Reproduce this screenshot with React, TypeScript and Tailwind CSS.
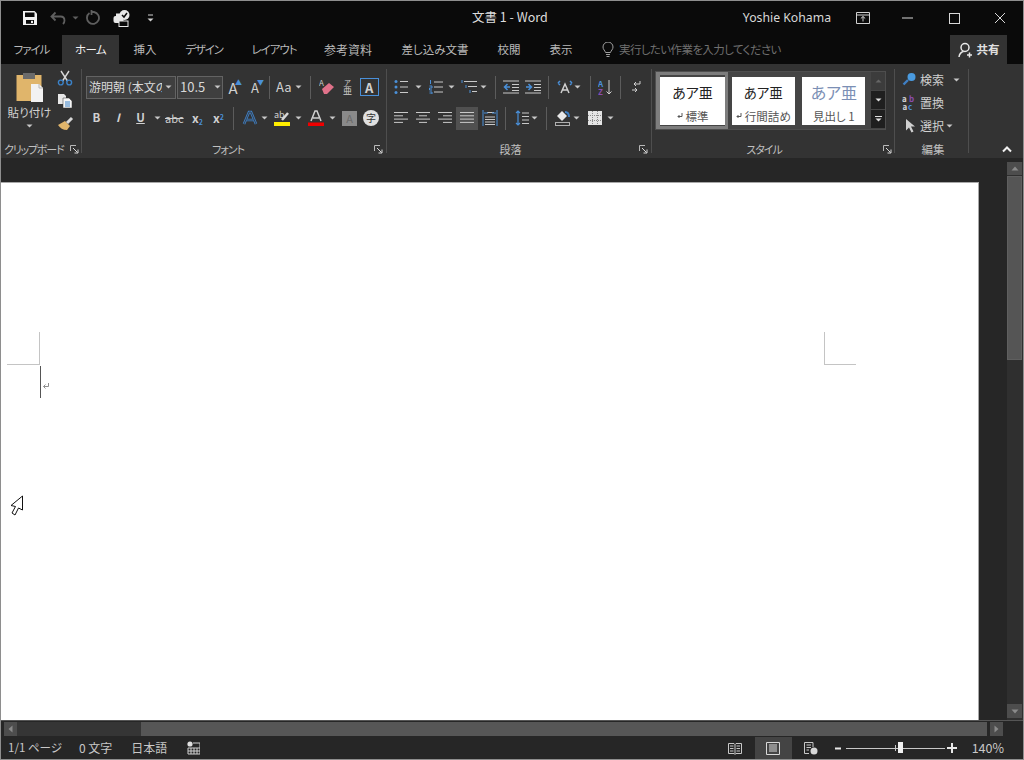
import React from "react";

const FONT = "[font-family:'Noto_Sans_CJK_JP','Noto_Sans',sans-serif] [font-feature-settings:'palt']";

type SP = { w?: number; h?: number; vb?: string; children?: React.ReactNode };
const S = ({ w = 16, h = 16, vb, children }: SP) => (
  <svg width={w} height={h} viewBox={vb ?? `0 0 ${w} ${h}`} fill="none" className="block shrink-0">
    {children}
  </svg>
);

const Caret = ({ c = "#c8c8c8" }: { c?: string }) => (
  <S w={7} h={4}>
    <path d="M0.5 0.5H6.5L3.5 3.5Z" fill={c} />
  </S>
);
const Launcher = () => (
  <S w={9} h={9}>
    <path d="M0.5 6V0.5H6" stroke="#b8b8b8" />
    <path d="M3 3L7.5 7.5M8 4.5V8H4.5" stroke="#d8d8d8" />
  </S>
);
const VSep = () => <div className="w-px h-[23px] bg-[#5c5c5c] shrink-0" />;
const GSep = () => <div className="w-px h-[84px] bg-[#4e4e4e] shrink-0 mt-[5px]" />;

const Lines = ({ rows }: { rows: [number, number][] }) => (
  <S w={14} h={14}>
    {rows.map(([a, b], i) => (
      <path key={i} d={`M${a} ${1.5 + i * 3.3}H${b}`} stroke="#c9c9c9" />
    ))}
  </S>
);

const Tab = ({ cls, children }: { cls: string; children: React.ReactNode }) => (
  <div className={`${cls} flex items-center justify-center text-[#b9b9b9] shrink-0`}>{children}</div>
);

const Style = ({ cls, top, topCls, sub, mark }: { cls: string; top: string; topCls: string; sub: string; mark?: boolean }) => (
  <div className={`${cls} h-[48px] bg-white flex flex-col items-center shrink-0`}>
    <div className={`${topCls} h-[31px] flex items-center justify-center [font-feature-settings:'normal'] whitespace-nowrap`}>{top}</div>
    <div className="text-[11.5px] leading-[16px] text-[#555] flex items-center gap-[3px] whitespace-nowrap">
      {mark && (
        <S w={6} h={7}>
          <path d="M5 1V4.5H1M2.5 3L1 4.5L2.5 6" stroke="#555" />
        </S>
      )}
      {sub}
    </div>
  </div>
);

export default function App() {
  return (
    <div className={`${FONT} w-[1024px] h-[760px] flex flex-col border border-[#8e8e8e] bg-[#262626] overflow-hidden`}>
      {/* title bar */}
      <div className="h-[34px] bg-[#0a0a0a] flex items-center shrink-0 relative">
        <div className="w-[21px]" />
        <S w={16} h={16}>
          <path d="M1 1H12.5L15 3.5V15H1Z" fill="#f2f2f2" />
          <rect x="3" y="2.5" width="9.5" height="4.5" fill="#0a0a0a" />
          <rect x="4" y="10" width="8" height="3.8" fill="#0a0a0a" />
          <rect x="9" y="10.8" width="2" height="2.2" fill="#f2f2f2" />
        </S>
        <div className="w-[12px]" />
        <S w={16} h={14}>
          <path d="M5.5 1.5L1.5 5.5L5.5 9.5M1.5 5.5H10.5C13 5.5 14.5 7.2 14.5 9.5C14.5 11 14 12 13 13" stroke="#5f5f5f" strokeWidth="1.8" />
        </S>
        <div className="w-[6px]" />
        <Caret c="#5f5f5f" />
        <div className="w-[7px]" />
        <S w={16} h={16}>
          <path d="M3.5 3A6 6 0 1 0 8 2H5.5M5.5 0V5" stroke="#5f5f5f" strokeWidth="1.8" />
        </S>
        <div className="w-[11px]" />
        <S w={17} h={17}>
          <rect x="0.5" y="6" width="10" height="7" rx="2" fill="#e8e8e8" />
          <path d="M3 6V3.5H8V6" fill="#e8e8e8" />
          <rect x="6" y="11" width="9" height="5.5" fill="#0a0a0a" stroke="#e8e8e8" />
          <circle cx="11.5" cy="5" r="5" fill="#e8e8e8" />
          <path d="M9 5L11 7L14 3" stroke="#0a0a0a" strokeWidth="1.5" />
        </S>
        <div className="w-[17px]" />
        <S w={7} h={9}>
          <path d="M1 1H6" stroke="#d0d0d0" />
          <path d="M0.5 4.5H6.5L3.5 7.5Z" fill="#d0d0d0" />
        </S>
        <div className="flex-1" />
        <div className="absolute left-[471px] top-[7px] text-[12.5px] leading-[18px] text-[#dedede] [font-feature-settings:'normal']">文書 1 - Word</div>
        <div className="text-[12.25px] text-[#d8d8d8] [font-family:'Noto_Sans','Noto_Sans_CJK_JP',sans-serif] whitespace-nowrap">Yoshie Kohama</div>
        <div className="w-[25px]" />
        <S w={14} h={12}>
          <path d="M0.5 0.5H13.5V11.5H0.5ZM0.5 3H13.5" stroke="#d0d0d0" />
          <path d="M7 9.5V4.5M4.8 6.5L7 4.5L9.2 6.5" stroke="#d0d0d0" />
        </S>
        <div className="w-[32px]" />
        <S w={12} h={2}>
          <path d="M0 1H11" stroke="#d8d8d8" />
        </S>
        <div className="w-[35px]" />
        <S w={11} h={11}>
          <rect x="0.5" y="0.5" width="10" height="10" stroke="#d8d8d8" />
        </S>
        <div className="w-[34px]" />
        <S w={12} h={12}>
          <path d="M1 1L11 11M11 1L1 11" stroke="#d8d8d8" />
        </S>
        <div className="w-[17px]" />
      </div>

      {/* tabs */}
      <div className="h-[29px] bg-[#0a0a0a] flex shrink-0 text-[11.5px]">
        <Tab cls="w-[61px] tracking-[-1px]">ファイル</Tab>
        <Tab cls="w-[57px] bg-[#333333] !text-[#f2f2f2] tracking-[-0.6px]">ホーム</Tab>
        <Tab cls="w-[52px]">挿入</Tab>
        <Tab cls="w-[66px] tracking-[-1.2px]">デザイン</Tab>
        <Tab cls="w-[74px] tracking-[-1px]">レイアウト</Tab>
        <Tab cls="w-[74px] text-[12px]">参考資料</Tab>
        <Tab cls="w-[100px]">差し込み文書</Tab>
        <Tab cls="w-[48px]">校閲</Tab>
        <Tab cls="w-[56px]">表示</Tab>
        <div className="w-[13px]" />
        <div className="flex items-center gap-[5px] text-[#6f6f6f] tracking-[-0.6px]">
          <S w={12} h={16}>
            <path d="M3.5 10.5C3 8.5 1 7.5 1 5A5 5 0 0 1 11 5C11 7.5 9 8.5 8.5 10.5ZM4 12.5H8M4.5 14.5H7.5" stroke="#a0a0a0" />
          </S>
          実行したい作業を入力してください
        </div>
        <div className="flex-1" />
        <div className="w-[57px] mr-[16px] bg-[#333333] flex items-center justify-center gap-[3px] font-bold text-[#e0e0e0]">
          <S w={16} h={16}>
            <circle cx="7" cy="5.5" r="4" stroke="#e8e8e8" strokeWidth="1.5" />
            <path d="M1 15C1.5 11.5 3.5 10 5.5 9.5M11.5 10.5V15.5M9 13H14" stroke="#e8e8e8" strokeWidth="1.5" />
          </S>
          共有
        </div>
      </div>

      {/* ribbon */}
      <div className="h-[94px] bg-[#333333] flex shrink-0 text-[#d0d0d0]">
        {/* clipboard */}
        <div className="w-[80px] flex flex-col shrink-0">
          <div className="h-[74px] flex">
            <div className="w-[55px] ml-px flex flex-col items-center pt-[9px]">
              <S w={29} h={30}>
                <path d="M1.5 2H26.5V28H1.5Z" fill="#e0b56b" />
                <rect x="8" y="0" width="12" height="6" fill="#6b6b6b" />
                <path d="M16 11H24L28 15V29H16Z" fill="#f2f2f2" />
                <path d="M24 11V15H28" stroke="#b8b8b8" />
              </S>
              <div className="text-[11.5px] leading-[16px] mt-[1px] whitespace-nowrap">貼り付け</div>
              <div className="mt-[4px]"><Caret /></div>
            </div>
            <div className="flex flex-col items-start pt-[6px] gap-[7px]">
              <S w={16} h={16}>
                <path d="M4 1L10.5 11M12 1L5.5 11" stroke="#d8d8d8" strokeWidth="1.4" />
                <circle cx="3.8" cy="12.5" r="2.4" stroke="#3b82c8" strokeWidth="1.4" />
                <circle cx="12.2" cy="12.5" r="2.4" stroke="#3b82c8" strokeWidth="1.4" />
              </S>
              <S w={16} h={16}>
                <path d="M1 1H7L9 3V11H1Z" fill="#e8e8e8" />
                <path d="M6 5H12L15 8V15H6Z" fill="#f5f5f5" stroke="#333" strokeWidth="0.5" />
                <path d="M8 9H13M8 11H13M8 13H13" stroke="#3b82c8" />
              </S>
              <S w={17} h={15}>
                <path d="M1 9L8 5L13 10L10 14C6 14 3 12 1 9Z" fill="#e0b56b" />
                <path d="M10 7L15 2" stroke="#d8d8d8" strokeWidth="3" />
              </S>
            </div>
          </div>
          <div className="flex items-center text-[11px] leading-[16px] text-[#c0c0c0] mt-[3px] pl-[3px] whitespace-nowrap tracking-[-1.2px]">
            クリップボード
            <div className="ml-[7px]"><Launcher /></div>
          </div>
        </div>
        <GSep />

        {/* font */}
        <div className="w-[304px] flex flex-col shrink-0 pl-[4px]">
          <div className="flex items-center h-[24px] mt-[11px]">
            <div className="w-[90px] h-[23px] bg-[#3f3f3f] border border-[#636363] flex items-center pl-[2px] text-[12px] text-[#d8d8d8] shrink-0 [font-feature-settings:'normal']">
              <span className="w-[73px] overflow-hidden whitespace-nowrap">游明朝 (本文の</span>
              <div className="ml-[3px]"><Caret /></div>
            </div>
            <div className="w-px" />
            <div className="w-[46px] h-[23px] bg-[#3f3f3f] border border-[#636363] flex items-center pl-[2px] text-[13px] text-[#d8d8d8] gap-[7px] shrink-0">
              <span className="w-[27px]">10.5</span>
              <Caret />
            </div>
            <div className="w-[1px]" />
            <div className="w-[18px] flex justify-center text-[15px] leading-none relative">A<span className="absolute right-0 top-[-1px] text-[7px] text-[#4a90d9]">▲</span></div>
            <div className="w-[4px]" />
            <div className="w-[18px] flex justify-center text-[13px] leading-none relative">A<span className="absolute right-0 top-[-2px] text-[7px] text-[#4a90d9]">▼</span></div>
            <div className="w-[5px]" />
            <VSep />
            <div className="w-[6px]" />
            <span className="text-[13px] text-[#d0d0d0]">Aa</span>
            <div className="w-[3px]" />
            <Caret />
            <div className="w-[8px]" />
            <VSep />
            <div className="w-[8px]" />
            <S w={16} h={16}>
              <text x="0" y="7" fontSize="8" fill="#c8c8c8">A</text>
              <path d="M3 10L10 4L15 8L8 15H5Z" fill="#e0728a" />
            </S>
            <div className="w-[7px]" />
            <div className="w-[12px] flex flex-col items-center leading-none text-[#d0d0d0]">
              <span className="text-[7px] leading-[7px]">ア</span>
              <span className="text-[9px] leading-[9px]">亜</span>
            </div>
            <div className="w-[6px]" />
            <div className="w-[19px] h-[18px] border border-[#4a90d9] flex items-center justify-center text-[13px] font-bold leading-none">A</div>
          </div>
          <div className="flex items-center h-[24px] mt-[7px]">
            <div className="w-[21px] text-center text-[11.5px] font-bold">B</div>
            <div className="w-[22px] text-center text-[11.5px] italic font-bold">I</div>
            <div className="w-[23px] text-center text-[11.5px] font-bold underline">U</div>
            <div className="w-[2px]" />
            <Caret />
            <div className="w-[4px]" />
            <div className="w-[18px] text-center text-[11px] line-through">abc</div>
            <div className="w-[4px]" />
            <div className="w-[21px] text-center text-[12px] font-bold">x<sub className="text-[#4a90d9] text-[7px]">2</sub></div>
            <div className="w-[21px] text-center text-[12px] font-bold">x<sup className="text-[#4a90d9] text-[7px]">2</sup></div>
            <div className="w-[4px]" />
            <VSep />
            <div className="w-[8px]" />
            <S w={16} h={16}>
              <path d="M2 14L7 2H9L14 14M4.5 10H11.5" stroke="#3f7fc4" strokeWidth="2.6" />
              <path d="M2 14L7 2H9L14 14M4.5 10H11.5" stroke="#333" strokeWidth="0.8" />
            </S>
            <div className="w-[3px]" />
            <Caret />
            <div className="w-[6px]" />
            <S w={16} h={16}>
              <text x="0" y="8" fontSize="9" fill="#d0d0d0">ab</text>
              <path d="M8 10L14 3" stroke="#d8d8d8" strokeWidth="2.5" />
              <rect x="0" y="12" width="16" height="4" fill="#ffee00" />
            </S>
            <div className="w-[5px]" />
            <Caret />
            <div className="w-[6px]" />
            <S w={16} h={16}>
              <path d="M3 11L7 1H9L13 11M5 8H11" stroke="#d0d0d0" strokeWidth="1.5" />
              <rect x="0" y="12.5" width="16" height="3.5" fill="#f00000" />
            </S>
            <div className="w-[5px]" />
            <Caret />
            <div className="w-[6px]" />
            <div className="w-[15px] h-[15px] bg-[#8a8a8a] text-[#6a6a6a] text-[11px] leading-[15px] text-center">A</div>
            <div className="w-[6px]" />
            <div className="w-[16px] h-[16px] rounded-full bg-[#e0e0e0] text-[#333] text-[10px] leading-[16px] text-center">字</div>
          </div>
          <div className="text-[11px] leading-[16px] text-[#c0c0c0] mt-[11px] flex justify-center relative pr-[16px] tracking-[-1px]">
            <span>フォント</span>
            <div className="absolute right-[3px] top-[4px]"><Launcher /></div>
          </div>
        </div>
        <GSep />

        {/* paragraph */}
        <div className="w-[264px] flex flex-col shrink-0 pl-[7px]">
          <div className="flex items-center h-[24px] mt-[11px]">
            <S w={14} h={14}>
              <circle cx="2" cy="1.5" r="1.5" fill="#4a90d9" />
              <circle cx="2" cy="7" r="1.5" fill="#4a90d9" />
              <circle cx="2" cy="12.5" r="1.5" fill="#4a90d9" />
              <path d="M6 1.5H14M6 7H14M6 12.5H14" stroke="#c9c9c9" />
            </S>
            <div className="w-[7px]" />
            <Caret />
            <div className="w-[7px]" />
            <S w={14} h={14}>
              <path d="M1.5 0V4M0.5 6H3V8H0.5V10H3M0.5 12H3V14H0.5" stroke="#4a90d9" />
              <path d="M5 2H14M5 7H14M5 12H14" stroke="#c9c9c9" />
            </S>
            <div className="w-[5px]" />
            <Caret />
            <div className="w-[6px]" />
            <S w={16} h={14}>
              <path d="M1 0V3M5 5V8M9 10V13" stroke="#4a90d9" />
              <path d="M3 1.5H16M7 6.5H16M11 11.5H16" stroke="#c9c9c9" />
            </S>
            <div className="w-[3px]" />
            <Caret />
            <div className="w-[8px]" />
            <VSep />
            <div className="w-[7px]" />
            <S w={16} h={14}>
              <path d="M0 1H16M9 4.5H16M9 7.5H16M9 10.5H16M0 13H16" stroke="#c9c9c9" />
              <path d="M7 7H2M4.5 4L1.5 7L4.5 10" stroke="#4a90d9" strokeWidth="1.5" />
            </S>
            <div className="w-[6px]" />
            <S w={16} h={14}>
              <path d="M0 1H16M9 4.5H16M9 7.5H16M9 10.5H16M0 13H16" stroke="#c9c9c9" />
              <path d="M1 7H6M3.5 4L6.5 7L3.5 10" stroke="#4a90d9" strokeWidth="1.5" />
            </S>
            <div className="w-[7px]" />
            <VSep />
            <div className="w-[8px]" />
            <S w={16} h={14}>
              <path d="M4 13L8 4L12 13M5.5 10H10.5" stroke="#d0d0d0" strokeWidth="1.5" />
              <path d="M1 3L3 1M1 3L3 5M15 3L13 1M15 3L13 5" stroke="#4a90d9" strokeWidth="1.5" />
            </S>
            <div className="w-[1px]" />
            <Caret />
            <div className="w-[9px]" />
            <VSep />
            <div className="w-[7px]" />
            <S w={14} h={16}>
              <text x="0" y="7.5" fontSize="8" fontWeight="700" fill="#4a90d9">A</text>
              <text x="0" y="15.5" fontSize="8" fontWeight="700" fill="#8a4db0">Z</text>
              <path d="M11 1V15M8.5 12.5L11 15L13.5 12.5" stroke="#d0d0d0" />
            </S>
            <div className="w-[8px]" />
            <VSep />
            <div className="w-[10px]" />
            <S w={11} h={14}>
              <path d="M9 1V4H3M5 2L3 4L5 6" stroke="#d0d0d0" />
              <path d="M1 10H6M4 8L6 10L4 12" stroke="#d0d0d0" />
            </S>
          </div>
          <div className="flex items-center h-[24px] mt-[7px]">
            <Lines rows={[[0, 14], [0, 9], [0, 14], [0, 9]]} />
            <div className="w-[8px]" />
            <Lines rows={[[0, 14], [3, 11], [0, 14], [3, 11]]} />
            <div className="w-[8px]" />
            <Lines rows={[[0, 14], [5, 14], [0, 14], [5, 14]]} />
            <div className="w-[4px]" />
            <div className="w-[22px] h-[23px] bg-[#505050] flex items-center justify-center shrink-0">
              <Lines rows={[[0, 14], [0, 14], [0, 14], [0, 14]]} />
            </div>
            <div className="w-[4px]" />
            <S w={16} h={16}>
              <path d="M3 7H13M3 9.5H13M3 12H13M3 14.5H13M5 2.5H12" stroke="#c9c9c9" />
              <path d="M1 0V16M15 0V16M2 3H6M10 3H14" stroke="#4a90d9" />
            </S>
            <div className="w-[7px]" />
            <VSep />
            <div className="w-[9px]" />
            <S w={14} h={16}>
              <path d="M3 1V15M1 3L3 1L5 3M1 13L3 15L5 13" stroke="#4a90d9" strokeWidth="1.2" />
              <path d="M7 3H14M7 6.5H14M7 10H14M7 13.5H14" stroke="#c9c9c9" />
            </S>
            <div className="w-[2px]" />
            <Caret />
            <div className="w-[8px]" />
            <VSep />
            <div className="w-[7px]" />
            <S w={17} h={16}>
              <path d="M3 6L8 1L13 6L8 11Z" fill="#e8e8e8" />
              <path d="M11 2C14 2 15 4 15 7" stroke="#3f7fc4" strokeWidth="2" />
              <rect x="1.5" y="12.5" width="14" height="3" stroke="#b0b0b0" />
            </S>
            <div className="w-[2px]" />
            <Caret />
            <div className="w-[8px]" />
            <S w={14} h={14}>
              <rect width="14" height="14" fill="#e4e4e4" />
              <path d="M0 4.5H14M0 9.5H14M4.5 0V14M9.5 0V14" stroke="#8a8a8a" strokeDasharray="1 1" />
            </S>
            <div className="w-[5px]" />
            <Caret />
          </div>
          <div className="text-[11px] leading-[16px] text-[#c0c0c0] mt-[11px] flex justify-center relative pr-[24px]">
            <span>段落</span>
            <div className="absolute right-[3px] top-[4px]"><Launcher /></div>
          </div>
        </div>
        <GSep />

        {/* styles */}
        <div className="w-[242px] flex flex-col shrink-0 pl-[3px]">
          <div className="mt-[7px] h-[59px] w-[231px] bg-[#454545] border border-[#4e4e4e] flex items-center shrink-0">
            <div className="w-[72px] h-[57px] border-[3px] border-l-4 border-[#7d7d7d] flex items-center justify-center shrink-0">
              <Style cls="w-[65px]" topCls="text-[14px] text-[#222]" top="あア亜" sub="標準" mark />
            </div>
            <div className="w-[4px]" />
            <Style cls="w-[63px]" topCls="text-[13.5px] text-[#222]" top="あア亜" sub="行間詰め" mark />
            <div className="w-[8px]" />
            <Style cls="w-[63px]" topCls="text-[16px] text-[#7b8fb5]" top="あア亜" sub="見出し 1" />
            <div className="w-[6px]" />
            <div className="w-[14px] h-[57px] flex flex-col shrink-0 gap-px">
              <div className="h-[18px] bg-[#3c3c3c] flex items-center justify-center"><S w={7} h={4}><path d="M0.5 3.5H6.5L3.5 0.5Z" fill="#666" /></S></div>
              <div className="h-[18px] bg-[#1f1f1f] flex items-center justify-center"><Caret c="#e0e0e0" /></div>
              <div className="h-[18px] bg-[#1f1f1f] flex flex-col items-center justify-center gap-px">
                <div className="w-[7px] h-px bg-[#e0e0e0]" />
                <Caret c="#e0e0e0" />
              </div>
            </div>
          </div>
          <div className="text-[11px] leading-[16px] text-[#c0c0c0] mt-[11px] flex justify-center relative pr-[21px] tracking-[-1px]">
            <span>スタイル</span>
            <div className="absolute right-[2px] top-[4px]"><Launcher /></div>
          </div>
        </div>
        <GSep />

        {/* editing */}
        <div className="w-[73px] flex flex-col shrink-0 pl-[7px] text-[12px]">
          <div className="flex items-center h-[23px] mt-[4px] whitespace-nowrap">
            <S w={15} h={15}>
              <circle cx="9.5" cy="5" r="4" fill="#4a9be0" />
              <path d="M6 8L1.5 12.5" stroke="#3f7fc4" strokeWidth="2.4" />
            </S>
            <span className="ml-[3px]">検索</span>
            <div className="ml-[9px]"><Caret /></div>
          </div>
          <div className="flex items-center h-[23px] whitespace-nowrap">
            <S w={16} h={15}>
              <text x="0" y="7" fontSize="8" fontWeight="700" fill="#d0d0d0">a</text>
              <text x="7" y="7" fontSize="8" fontWeight="700" fill="#8a4db0">b</text>
              <text x="6" y="14.5" fontSize="8" fontWeight="700" fill="#4a90d9">c</text>
              <text x="0.5" y="14.5" fontSize="8" fontWeight="700" fill="#d0d0d0">a</text>
            </S>
            <span className="ml-[2px]">置換</span>
          </div>
          <div className="flex items-center h-[23px] whitespace-nowrap">
            <div className="w-[16px] flex justify-center">
              <S w={11} h={15}>
                <path d="M1 1V12.5L4 9.5L6.5 14.5L8.5 13.5L6 8.5H10Z" fill="#d0d0d0" />
              </S>
            </div>
            <span className="ml-[2px]">選択</span>
            <div className="ml-[2px]"><Caret /></div>
          </div>
          <div className="text-[11.5px] leading-[16px] text-[#c0c0c0] mt-[4px] flex justify-center pr-[4px]">
            <span>編集</span>
          </div>
        </div>
        <GSep />
        <div className="flex-1 flex justify-end items-end pb-[5px] pr-[11px]">
          <S w={10} h={7}>
            <path d="M1 5.5L5 1.5L9 5.5" stroke="#f0f0f0" strokeWidth="2" />
          </S>
        </div>
      </div>

      {/* document */}
      <div className="flex-1 flex min-h-0 bg-[#262626]">
        <div className="flex-1 pt-[24px] pr-[28px] min-w-0 flex">
          <div className="flex-1 bg-white relative border-t border-r border-[#a8a8a8]">
            <div className="absolute left-[6px] top-[181px] w-[32px] h-px bg-[#c4c4c4]" />
            <div className="absolute left-[38px] top-[149px] w-px h-[33px] bg-[#c4c4c4]" />
            <div className="absolute left-[823px] top-[181px] w-[32px] h-px bg-[#c4c4c4]" />
            <div className="absolute left-[823px] top-[149px] w-px h-[33px] bg-[#c4c4c4]" />
            <div className="absolute left-[39px] top-[183px] w-px h-[32px] bg-[#555]" />
            <div className="absolute left-[41px] top-[199px]">
              <S w={8} h={8}>
                <path d="M6.5 1V4.5H1.5M3.5 2.5L1.5 4.5L3.5 6.5" stroke="#8f8f8f" />
              </S>
            </div>
            <div className="absolute left-[9px] top-[312px]">
              <S w={14} h={21}>
                <path d="M12.5 1L1 10.5L5.5 11.5L2 18L5 20L8.5 13L12.5 15Z" fill="#fff" stroke="#111" />
              </S>
            </div>
          </div>
        </div>
        <div className="w-[16px] flex flex-col shrink-0 bg-[#2f2f2f]">
          <div className="h-[4px] bg-[#262626] shrink-0" />
          <div className="h-[13px] mr-px bg-[#4d4d4d] flex items-center justify-center shrink-0">
            <S w={8} h={5}><path d="M0.5 4.5H7.5L4 0.5Z" fill="#8a8a8a" /></S>
          </div>
          <div className="h-px shrink-0" />
          <div className="h-[184px] mr-px bg-[#555555] border border-[#5f5f5f] shrink-0" />
          <div className="flex-1" />
          <div className="h-[14px] mr-px mb-[2px] bg-[#4d4d4d] flex items-center justify-center shrink-0">
            <S w={8} h={5}><path d="M0.5 0.5H7.5L4 4.5Z" fill="#8a8a8a" /></S>
          </div>
        </div>
      </div>

      {/* hscroll */}
      <div className="h-[17px] bg-[#262626] flex items-stretch shrink-0 border-t border-[#555] py-px pr-[20px]">
        <div className="w-[3px]" />
        <div className="w-[13px] bg-[#4d4d4d] flex items-center justify-center shrink-0">
          <S w={5} h={8}><path d="M4.5 0.5V7.5L0.5 4Z" fill="#8a8a8a" /></S>
        </div>
        <div className="w-[124px] bg-[#353535] shrink-0" />
        <div className="flex-1 bg-[#565656]" />
        <div className="w-[3px]" />
        <div className="w-[13px] bg-[#4d4d4d] flex items-center justify-center shrink-0">
          <S w={5} h={8}><path d="M0.5 0.5V7.5L4.5 4Z" fill="#8a8a8a" /></S>
        </div>
      </div>

      {/* status */}
      <div className="h-[22px] bg-[#262626] flex items-stretch shrink-0 text-[11.5px] text-[#c8c8c8]">
        <div className="w-[7px]" />
        <div className="flex items-center whitespace-nowrap">1/1 ページ</div>
        <div className="w-[17px]" />
        <div className="flex items-center whitespace-nowrap text-[12px]">0 文字</div>
        <div className="w-[19px]" />
        <div className="flex items-center whitespace-nowrap text-[12px]">日本語</div>
        <div className="w-[20px]" />
        <div className="flex items-center">
          <S w={13} h={14}>
            <circle cx="3" cy="3" r="2.6" fill="#e0e0e0" />
            <path d="M6 2H13V13H1V7H13M1 10H13M4 7V13M7 7V13M10 7V13" stroke="#d0d0d0" />
          </S>
        </div>
        <div className="flex-1" />
        <div className="flex items-center">
          <S w={14} h={13}>
            <path d="M0.5 1.5H6L7 2.5L8 1.5H13.5V11.5H8L7 12.5L6 11.5H0.5ZM7 2.5V12M2 4H5.5M2 6.5H5.5M2 9H5.5M8.5 4H12M8.5 6.5H12M8.5 9H12" stroke="#c8c8c8" />
          </S>
        </div>
        <div className="w-[13px]" />
        <div className="w-[37px] bg-[#444444] flex items-center justify-center">
          <S w={14} h={13}>
            <path d="M0.5 0.5H13.5V12.5H0.5ZM3 3H11M3 5H11M3 7H11M3 9H11" stroke="#d8d8d8" />
          </S>
        </div>
        <div className="w-[12px]" />
        <div className="flex items-center">
          <S w={14} h={13}>
            <path d="M9 5V0.5H0.5V11.5H5M2.5 3H7M2.5 5.5H7M2.5 8H5" stroke="#c8c8c8" />
            <circle cx="10" cy="9" r="3.5" fill="#d8d8d8" />
          </S>
        </div>
        <div className="w-[17px]" />
        <div className="flex items-center">
          <S w={6} h={3}><path d="M0 1.5H6" stroke="#e8e8e8" strokeWidth="2" /></S>
        </div>
        <div className="w-[5px]" />
        <div className="w-[99px] flex items-center relative">
          <div className="w-full h-px bg-[#c8c8c8]" />
          <div className="absolute left-[52px] top-[5px] w-[5px] h-[11px] bg-[#f0f0f0]" />
          <div className="absolute left-[49px] top-[8px] w-px h-[6px] bg-[#c8c8c8]" />
        </div>
        <div className="w-[2px]" />
        <div className="flex items-center">
          <S w={10} h={10}><path d="M0 5H10M5 0V10" stroke="#e8e8e8" strokeWidth="2" /></S>
        </div>
        <div className="w-[15px]" />
        <div className="flex items-center text-[12.5px] whitespace-nowrap [font-feature-settings:'normal']">140%</div>
        <div className="w-[19px]" />
      </div>
    </div>
  );
}
